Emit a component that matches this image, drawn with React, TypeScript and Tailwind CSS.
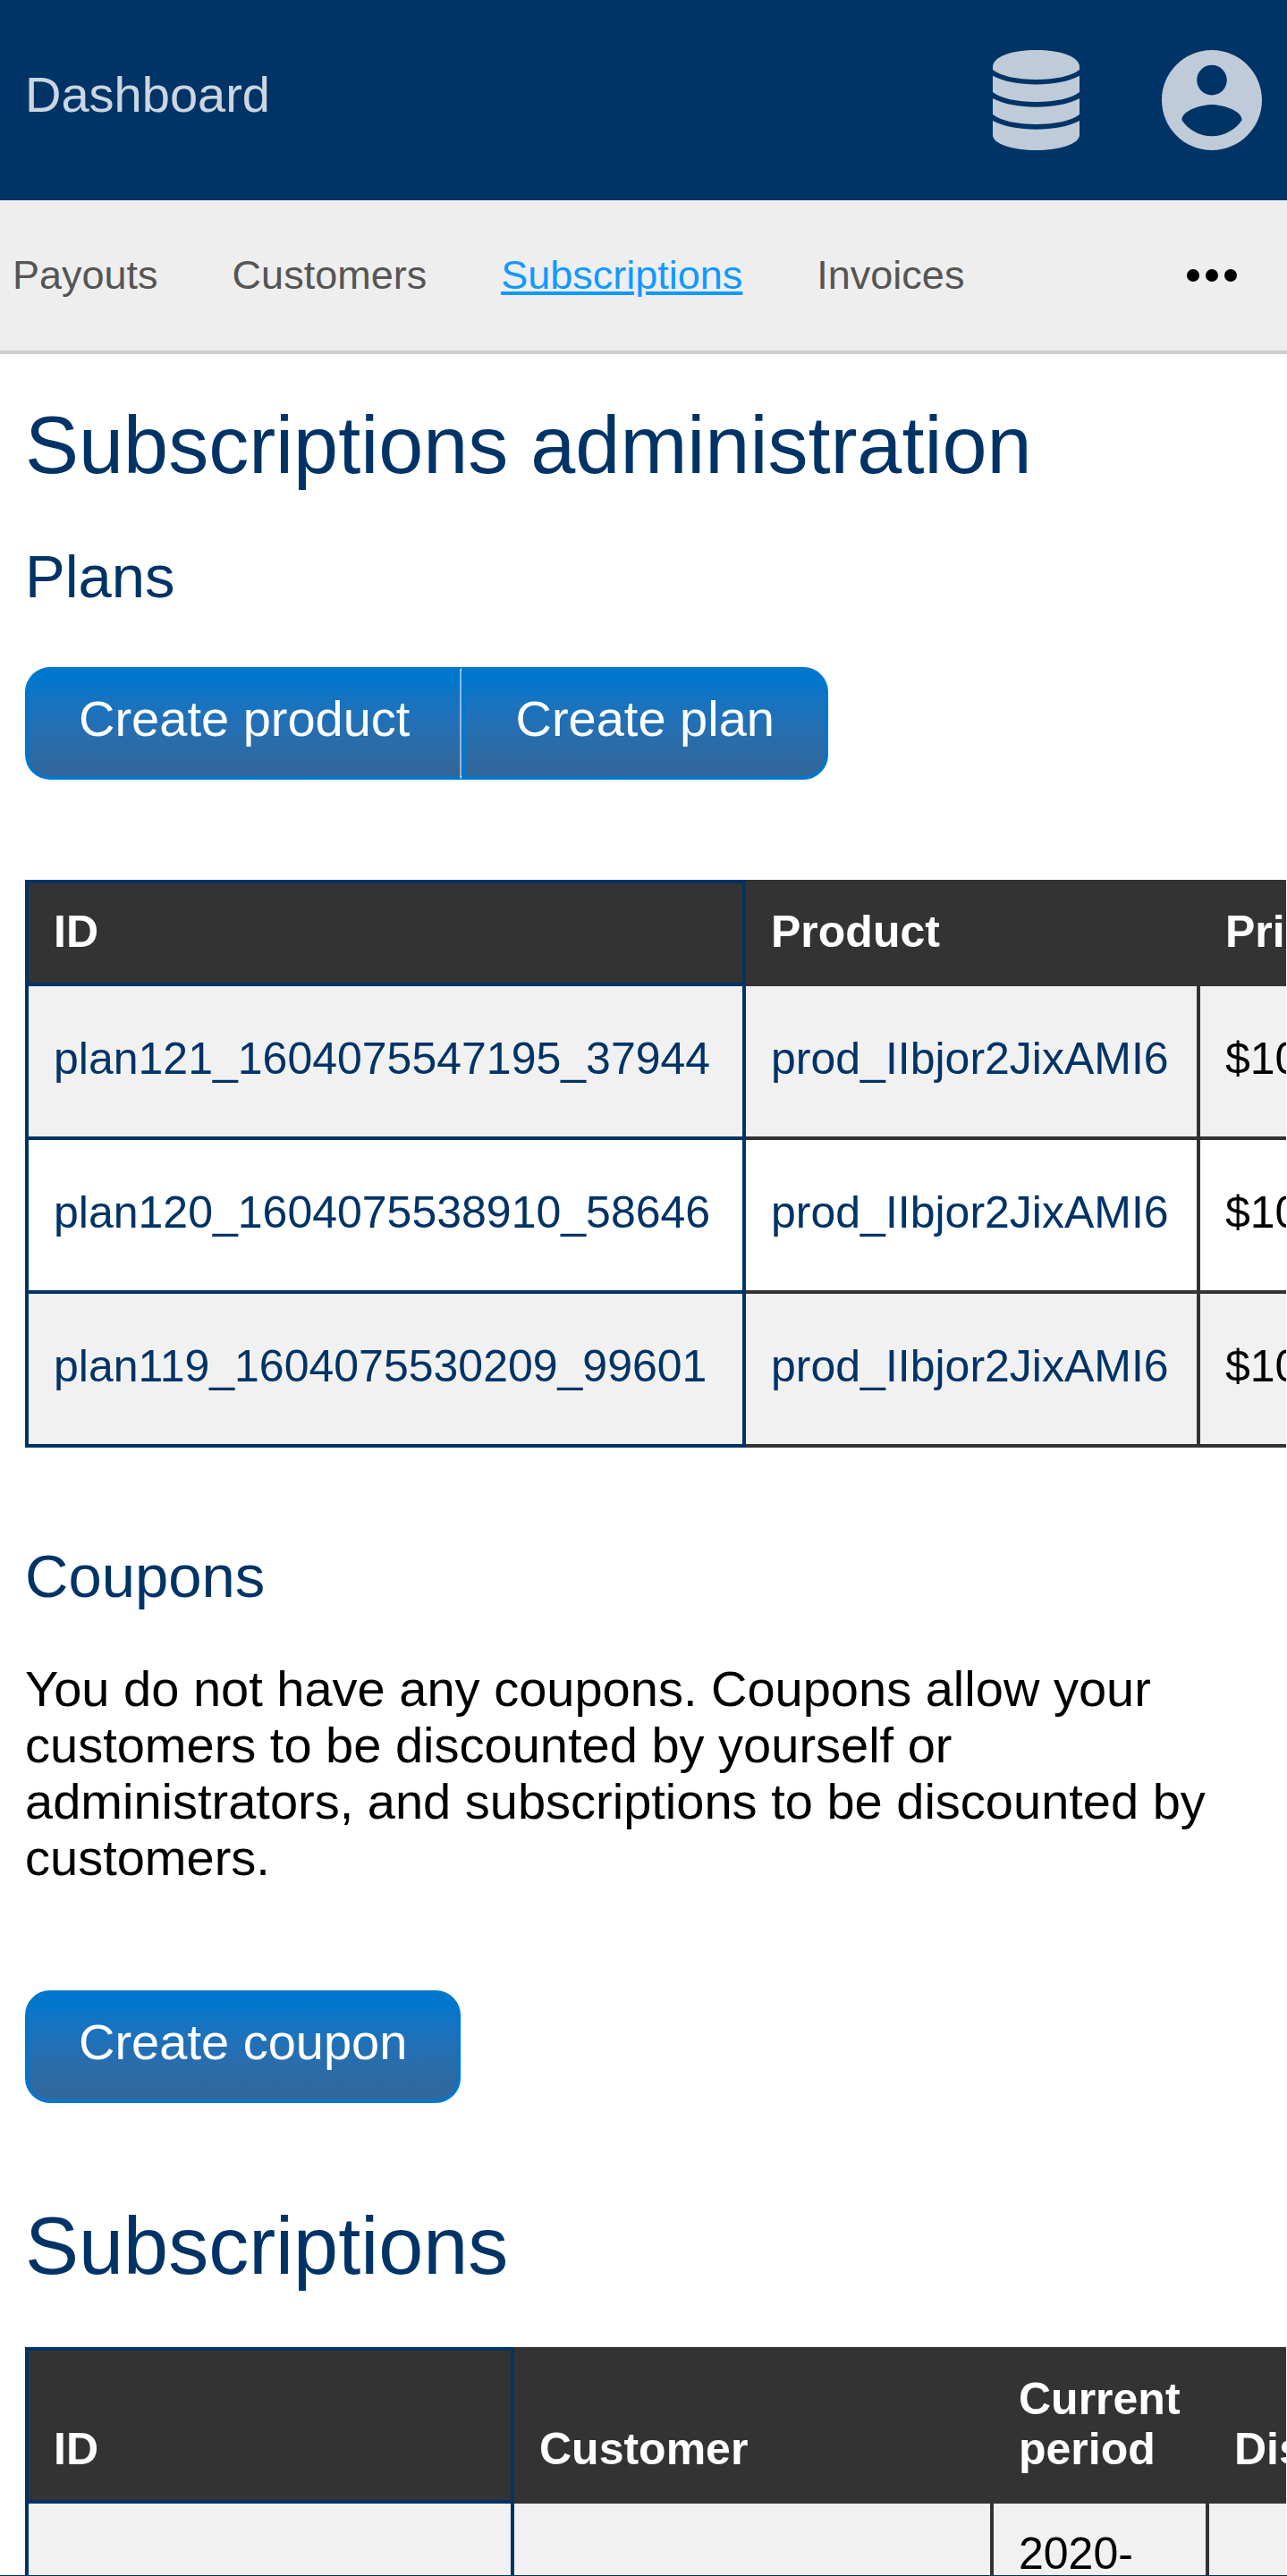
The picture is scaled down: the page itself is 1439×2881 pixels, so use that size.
import React from "react";

function DatabaseIcon() {
  return (
    <svg viewBox="0 0 97 112" className="h-28 w-[97px]" fill="currentColor" aria-hidden="true">
      <path d="M0 19C0 7 22 0 48.5 0S97 7 97 19v3C88 29 70 33 48.5 33S9 29 0 22z" />
      <path d="M0 28.7c12 6.5 30 9.7 48.5 9.7S85 35.2 97 28.7V47c-9 7-27 11-48.5 11S9 54 0 47z" />
      <path d="M0 54c12 6.5 30 9.7 48.5 9.7S85 60.5 97 54v18c-9 7-27 11-48.5 11S9 79 0 72z" />
      <path d="M0 79c12 6.5 30 9.7 48.5 9.7S85 85.5 97 79v16c0 10-22 17-48.5 17S0 105 0 95z" />
    </svg>
  );
}

function AccountIcon() {
  return (
    <svg viewBox="2 2 20 20" className="size-28" fill="currentColor" aria-hidden="true">
      <path d="M12 2C6.48 2 2 6.48 2 12s4.48 10 10 10 10-4.48 10-10S17.52 2 12 2zm0 3c1.66 0 3 1.34 3 3s-1.34 3-3 3-3-1.34-3-3 1.34-3 3-3zm0 14.2c-2.5 0-4.71-1.28-6-3.22.03-1.99 4-3.08 6-3.08 1.99 0 5.97 1.09 6 3.08-1.29 1.94-3.5 3.22-6 3.22z" />
    </svg>
  );
}

function MoreIcon() {
  return (
    <svg viewBox="0 0 56 14" className="h-3.5 w-14" fill="currentColor" aria-hidden="true">
      <circle cx="7" cy="7" r="7" />
      <circle cx="28" cy="7" r="7" />
      <circle cx="49" cy="7" r="7" />
    </svg>
  );
}

const navLinks = ["Payouts", "Customers", "Subscriptions", "Invoices"];

const plans = [
  { id: "plan121_1604075547195_37944", product: "prod_IIbjor2JixAMI6", price: "$10.00" },
  { id: "plan120_1604075538910_58646", product: "prod_IIbjor2JixAMI6", price: "$10.00" },
  { id: "plan119_1604075530209_99601", product: "prod_IIbjor2JixAMI6", price: "$10.00" },
];

const buttonFace =
  "h-[126px] border-4 border-[#0077cc] bg-linear-to-b from-[#0077cc] from-10% to-[#336699] px-14 pb-3 text-[56px] leading-[63px] text-white";
const headCell = "border-4 border-[#333333] bg-[#333333] px-7 pt-[26px] pb-[29px] text-left align-bottom font-bold text-white";
const idHeadCell = "border-4 border-[#003366] bg-[#333333] px-7 pt-[26px] pb-[29px] text-left align-bottom font-bold text-white";
const bodyCell = "border-4 border-[#333333] px-7 pb-1.5";
const idBodyCell = "border-4 border-[#003366] px-7 pb-1.5";

export default function App() {
  return (
    <div className="flex h-screen flex-col overflow-hidden bg-white font-['Liberation_Sans',Arial,sans-serif] text-black">
      <header className="flex h-56 shrink-0 items-center justify-between bg-[#003366] px-7">
        <a href="#dashboard" className="pb-3.5 text-[56px] leading-[63px] text-white/80">
          Dashboard
        </a>
        <div className="flex items-center gap-[92px] text-white/75">
          <button type="button" aria-label="Administration">
            <DatabaseIcon />
          </button>
          <button type="button" aria-label="Account">
            <AccountIcon />
          </button>
        </div>
      </header>

      <nav className="flex h-[172px] shrink-0 items-center justify-between border-b-4 border-[#cccccc] bg-[#eeeeee] pr-14 pl-3.5">
        <div className="flex gap-[83px] text-[45px] leading-[52px] text-[#555555]">
          {navLinks.map((name) => (
            <a
              key={name}
              href={`#${name.toLowerCase()}`}
              className={name === "Subscriptions" ? "text-[#1199ff] underline" : ""}
            >
              {name}
            </a>
          ))}
        </div>
        <button type="button" aria-label="More" className="text-black">
          <MoreIcon />
        </button>
      </nav>

      <main className="min-h-0 flex-1 overflow-hidden px-7 text-[56px] leading-[63px]">
        <h1 className="mt-[51px] text-[90px] leading-[102px] text-[#003366]">Subscriptions administration</h1>

        <section>
          <h2 className="mt-[57px] text-[67px] leading-[77px] text-[#003366]">Plans</h2>
          <div className="mt-[63px] flex">
            <button type="button" className={`${buttonFace} rounded-l-[28px] border-r-2 border-r-white/50`}>
              Create product
            </button>
            <button type="button" className={`${buttonFace} rounded-r-[28px]`}>
              Create plan
            </button>
          </div>

          <div className="-mr-[27px] mt-28 overflow-hidden">
            <table className="w-[1800px] table-fixed border-collapse text-[50px] leading-[56px]">
              <colgroup>
                <col className="w-[802px]" />
                <col className="w-[508px]" />
                <col />
              </colgroup>
              <thead>
                <tr>
                  <th className={idHeadCell}>ID</th>
                  <th className={headCell}>Product</th>
                  <th className={headCell}>Price</th>
                </tr>
              </thead>
              <tbody>
                {plans.map((plan) => (
                  <tr key={plan.id} className="h-[172px] odd:bg-[#f1f1f1]">
                    <td className={idBodyCell}>
                      <a href={`#${plan.id}`} className="text-[#003366]">
                        {plan.id}
                      </a>
                    </td>
                    <td className={bodyCell}>
                      <a href={`#${plan.product}`} className="text-[#003366]">
                        {plan.product}
                      </a>
                    </td>
                    <td className={bodyCell}>{plan.price}</td>
                  </tr>
                ))}
              </tbody>
            </table>
          </div>
        </section>

        <section>
          <h2 className="mt-[105px] text-[67px] leading-[77px] text-[#003366]">Coupons</h2>
          <p className="mt-14">
            You do not have any coupons. Coupons allow your customers to be discounted by yourself or administrators,
            and subscriptions to be discounted by customers.
          </p>
          <button type="button" className={`${buttonFace} mt-[117px] block rounded-[28px]`}>
            Create coupon
          </button>
        </section>

        <section>
          <h1 className="mt-[109px] text-[90px] leading-[102px] text-[#003366]">Subscriptions</h1>
          <div className="-mr-[27px] mt-[62px] overflow-hidden">
            <table className="w-[2000px] table-fixed border-collapse text-[50px] leading-[56px]">
              <colgroup>
                <col className="w-[543px]" />
                <col className="w-[536px]" />
                <col className="w-[241px]" />
                <col />
              </colgroup>
              <thead>
                <tr>
                  <th className={idHeadCell}>ID</th>
                  <th className={headCell}>Customer</th>
                  <th className={headCell}>Current period</th>
                  <th className={headCell}>Discount</th>
                </tr>
              </thead>
              <tbody>
                <tr className="bg-[#f1f1f1]">
                  <td className={idBodyCell} />
                  <td className={bodyCell} />
                  <td className={`${bodyCell} pt-7`}>2020-</td>
                  <td className={bodyCell} />
                </tr>
              </tbody>
            </table>
          </div>
        </section>
      </main>

      <div className="h-px shrink-0 bg-[#003366]" />
    </div>
  );
}
